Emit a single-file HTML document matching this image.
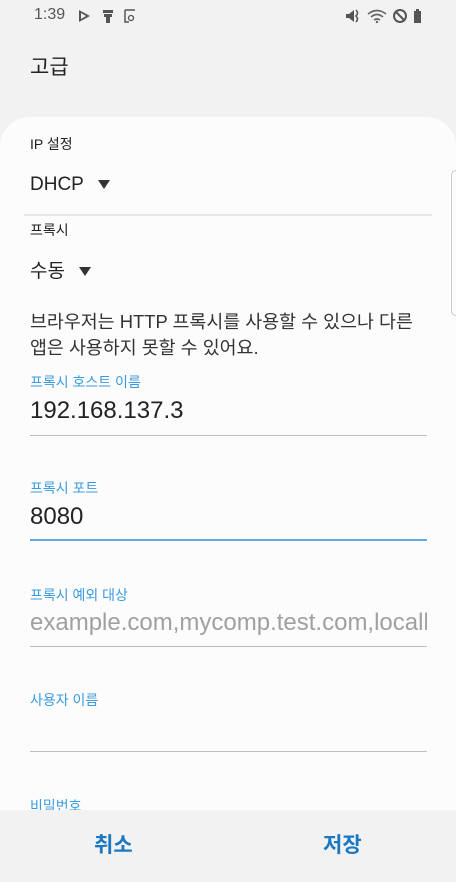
<!DOCTYPE html>
<html><head><meta charset="utf-8"><style>
*{margin:0;padding:0;box-sizing:border-box}
body{width:456px;height:882px;background:#f2f2f2;position:relative;overflow:hidden;font-family:"Liberation Sans","Noto Sans CJK KR",sans-serif;color:#222}
.a{position:absolute;white-space:nowrap;line-height:1}
.card{position:absolute;left:0;top:117px;width:456px;height:700px;background:#fcfcfc;border-radius:30px 30px 0 0}
.lbl{font-size:14px;color:#3a9be0}
.val{font-size:24px;color:#222}
.ln{position:absolute;left:30px;width:397px;height:1px;background:#bdbdbd}
.tri{display:inline-block;width:0;height:0;border-left:6px solid transparent;border-right:6px solid transparent;border-top:9px solid #333;vertical-align:middle;margin-left:14px}
.bar{position:absolute;left:0;top:810px;width:456px;height:72px;background:#f2f2f2}
.btn{font-size:21px;font-weight:bold;color:#1a78c2}
</style></head><body>
<div class="a" style="left:34px;top:7px;font-size:16px;color:#555">1:39</div>
<svg class="a" style="left:78px;top:9px" width="66" height="14" viewBox="0 0 66 14">
<path d="M1 1 L12 7 L1 13 Z" fill="#555"/><path d="M3 4 L8 7 L3 10Z" fill="#f2f2f2"/>
<rect x="25" y="1" width="10" height="3" fill="#555"/><rect x="26" y="5" width="8" height="3" fill="#555"/><rect x="28" y="8" width="4" height="6" fill="#555"/>
<path d="M47 1 V13 H51 M47 1 H57" stroke="#555" stroke-width="1.5" fill="none"/><circle cx="53" cy="9" r="2.5" stroke="#555" stroke-width="1.3" fill="none"/>
</svg>
<svg class="a" style="left:344px;top:7px" width="82" height="18" viewBox="0 0 82 18">
<path d="M2 7 H5 L10 3 V15 L5 11 H2Z" fill="#555"/><path d="M12 3 Q15 6 12 9 Q15 12 12 15" stroke="#555" stroke-width="1.5" fill="none"/>
<path d="M24 7 Q33 0 42 7 M27 10 Q33 5 39 10 M30 13 Q33 11 36 13" stroke="#666" stroke-width="1.6" fill="none"/><circle cx="33" cy="15" r="1.2" fill="#666"/>
<circle cx="56" cy="9" r="6" stroke="#555" stroke-width="2" fill="none"/><path d="M52 5 L60 13" stroke="#555" stroke-width="2"/>
<rect x="70" y="4" width="7" height="12" fill="#555"/><rect x="72" y="2" width="3" height="2" fill="#555"/>
</svg>
<div class="a" style="left:30px;top:57px;font-size:21px;color:#222">고급</div>
<div class="card"></div>
<div style="position:absolute;left:451px;top:170px;width:10px;height:146px;border:1px solid #ccc;border-radius:5px"></div>
<div class="a" style="left:30px;top:137px;font-size:14px">IP 설정</div>
<div class="a" style="left:30px;top:175px;font-size:19px">DHCP<span class="tri"></span></div>
<div style="position:absolute;left:24px;top:214px;width:408px;height:2px;background:#e6e6e6"></div>
<div class="a" style="left:30px;top:223px;font-size:14px">프록시</div>
<div class="a" style="left:30px;top:262px;font-size:19px">수동<span class="tri"></span></div>
<div class="a" style="left:30px;top:313px;font-size:18.4px;color:#333">브라우저는 HTTP 프록시를 사용할 수 있으나 다른</div>
<div class="a" style="left:30px;top:339px;font-size:18.4px;color:#333">앱은 사용하지 못할 수 있어요.</div>
<div class="a lbl" style="left:30px;top:375px">프록시 호스트 이름</div>
<div class="a val" style="left:30px;top:399px">192.168.137.3</div>
<div class="ln" style="top:435px"></div>
<div class="a lbl" style="left:30px;top:481px">프록시 포트</div>
<div class="a val" style="left:30px;top:505px">8080</div>
<div class="ln" style="top:539px;height:2px;background:#64a8e6"></div>
<div class="a lbl" style="left:30px;top:588px">프록시 예외 대상</div>
<div class="a val" style="left:30px;top:611px;color:#a0a0a0;width:397px;overflow:hidden">example.com,mycomp.test.com,localhost</div>
<div class="ln" style="top:646px"></div>
<div class="a lbl" style="left:30px;top:693px">사용자 이름</div>
<div class="ln" style="top:751px"></div>
<div class="a lbl" style="left:30px;top:799px">비밀번호</div>
<div class="bar"></div>
<div class="a btn" style="left:94px;top:835px">취소</div>
<div class="a btn" style="left:323px;top:835px">저장</div>
</body></html>
